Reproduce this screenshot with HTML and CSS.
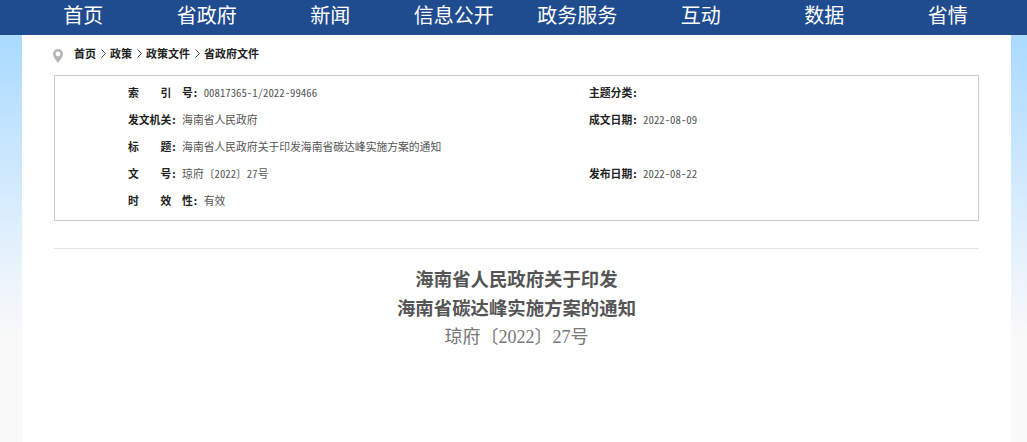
FILE: index.html
```html
<!DOCTYPE html>
<html lang="zh-CN">
<head>
    <meta charset="utf-8" />
    <title>海南省人民政府关于印发海南省碳达峰实施方案的通知</title>
    <link rel="stylesheet" href="styles.css">
</head>
<body>
    <nav class="topnav">
        <ul class="navlist">
            <li>首页</li>
            <li>省政府</li>
            <li>新闻</li>
            <li>信息公开</li>
            <li>政务服务</li>
            <li>互动</li>
            <li>数据</li>
            <li>省情</li>
        </ul>
    </nav>
    <section class="mainwrapper">
        <div class="crumbs">
            <svg class="pin" width="10" height="14" viewBox="0 0 10 14">
                <path fill="#b5b5b5" fill-rule="evenodd" d="M5 0a5 5 0 0 1 5 5c0 3-3 6-5 9C3 11 0 8 0 5a5 5 0 0 1 5-5zm0 2.6a2.4 2.4 0 1 0 0 4.8 2.4 2.4 0 0 0 0-4.8z" />
            </svg>
            <span>首页</span>
            <svg class="chevron" width="5" height="9" viewBox="0 0 5 9"><path d="M.5.5l4 4-4 4" /></svg>
            <span>政策</span>
            <svg class="chevron" width="5" height="9" viewBox="0 0 5 9"><path d="M.5.5l4 4-4 4" /></svg>
            <span>政策文件</span>
            <svg class="chevron" width="5" height="9" viewBox="0 0 5 9"><path d="M.5.5l4 4-4 4" /></svg>
            <span>省政府文件</span>
        </div>
        <div class="infobox">
            <div class="inforow">
                <p><b>索　　引　号:</b><span>00817365-1/2022-99466</span></p>
                <p><b>主题分类:</b></p>
            </div>
            <div class="inforow">
                <p><b>发文机关:</b><span>海南省人民政府</span></p>
                <p><b>成文日期:</b><span>2022-08-09</span></p>
            </div>
            <div class="inforow">
                <p><b>标　　题:</b><span>海南省人民政府关于印发海南省碳达峰实施方案的通知</span></p>
                <p></p>
            </div>
            <div class="inforow">
                <p><b>文　　号:</b><span>琼府〔2022〕27号</span></p>
                <p><b>发布日期:</b><span>2022-08-22</span></p>
            </div>
            <div class="inforow">
                <p><b>时　　效　性:</b><span>有效</span></p>
                <p></p>
            </div>
        </div>
        <hr class="divider" />
        <h1 class="doctitle">海南省人民政府关于印发<br />海南省碳达峰实施方案的通知</h1>
        <p class="docnumber">琼府〔2022〕27号</p>
    </section>
</body>
</html>
```

FILE: styles.css
```css
* {
    box-sizing: border-box;
}

html, body {
    margin: 0;
    height: 100%;
    overflow: hidden;
}

body {
    background: linear-gradient(#a9daff 35px, #eaf3fc 270px, #f9f9f9 340px);
    font-family: "Liberation Serif", "Noto Sans CJK SC", serif;
}

.topnav {
    height: 35px;
    background-color: #1f4c8f;
    padding: 0 17.5px 0 21.5px;
}

.navlist {
    display: grid;
    grid-template-columns: repeat(8, 1fr);
    margin: 0;
    padding: 0;
    list-style: none;
}

    .navlist li {
        height: 29px;
        line-height: 29px;
        text-align: center;
        font-family: "Noto Sans CJK SC", sans-serif;
        font-size: 20px;
        color: #fff;
    }

.mainwrapper {
    margin: 0 16px 0 22px;
    padding: 0 32px;
    height: 407px;
    background-color: #fff;
}

.crumbs {
    display: flex;
    align-items: center;
    height: 36px;
    margin-bottom: 4px;
    font-size: 11px;
    font-weight: bold;
    color: #222;
}

.pin {
    margin: 5px 11px 0 -1px;
}

.chevron {
    margin: 0 4px 0 5px;
    fill: none;
    stroke: #444;
    stroke-width: 1;
}

.infobox {
    height: 146px;
    padding: 3px 0 0 73px;
    border: 1px solid #ccc;
    font-family: "Noto Sans Mono CJK SC", "Noto Sans CJK SC", monospace;
    font-size: 10.8px;
    color: #555;
}

.inforow {
    display: grid;
    grid-template-columns: 461px 1fr;
    height: 27px;
    line-height: 27px;
}

    .inforow p {
        margin: 0;
    }

    .inforow b {
        margin-right: 5.5px;
        color: #222;
    }

.divider {
    height: 1px;
    margin: 27px 0 0;
    border: 0;
    background-color: #e5e5e5;
}

.doctitle {
    margin: 17px 0 0;
    text-align: center;
    font-size: 18.4px;
    line-height: 29px;
    font-weight: bold;
    color: #555;
}

.docnumber {
    margin: 0;
    text-align: center;
    font-size: 18px;
    line-height: 26px;
    color: #777;
}
```
